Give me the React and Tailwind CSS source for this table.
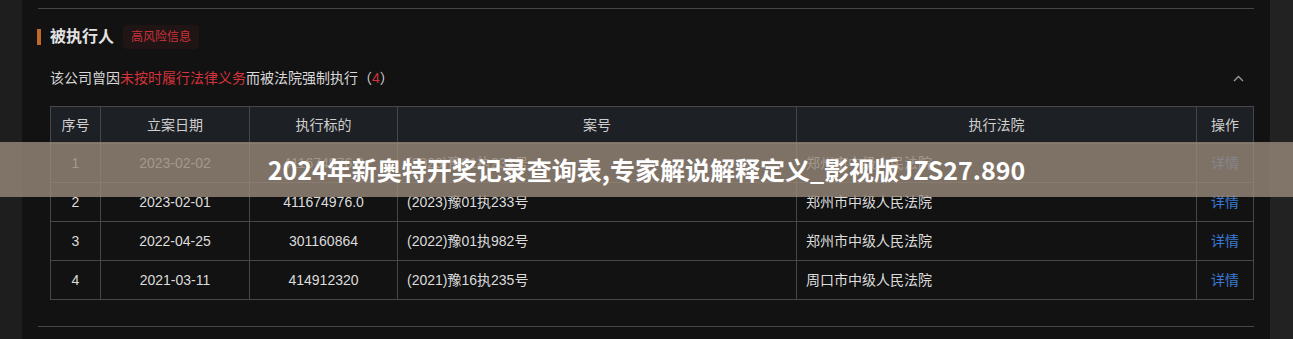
import React from 'react'

const rows = [
  { no: 1, date: '2023-02-02', amount: '411674976.0', caseNo: '(2023)豫01执233号', court: '郑州市中级人民法院' },
  { no: 2, date: '2023-02-01', amount: '411674976.0', caseNo: '(2023)豫01执233号', court: '郑州市中级人民法院' },
  { no: 3, date: '2022-04-25', amount: '301160864', caseNo: '(2022)豫01执982号', court: '郑州市中级人民法院' },
  { no: 4, date: '2021-03-11', amount: '414912320', caseNo: '(2021)豫16执235号', court: '周口市中级人民法院' },
]

const ChevronUp = () => (
  <svg width="11" height="7" viewBox="0 0 11 7" fill="none">
    <path d="M1 6 L5.5 1.5 L10 6" stroke="#9a9a9a" strokeWidth="1.4" />
  </svg>
)

const App = () => {
  return (
    <div
      className="relative flex w-[1293px] h-[339px] overflow-hidden bg-[#1f1f1f]"
      style={{ fontFamily: '"Liberation Sans", "Noto Sans CJK SC", sans-serif' }}
    >
      <div className="w-[22px] shrink-0 bg-[#1e1e1e]" />

      <div className="flex-1 bg-[#121212] px-4 pt-2">
        <div className="border-t border-[#464646]" />

        <div className="flex items-center mt-[16px] h-[24px]">
          <div className="w-[4px] h-[16px] bg-[#c06a2a] -ml-px" />
          <span className="ml-[9px] text-[16px] font-bold text-[#e2e2e2] leading-none">被执行人</span>
          <span className="ml-[9px] h-[24px] px-[8px] flex items-center bg-[#1f1515] text-[12px] text-[#cc3139] rounded-sm">
            高风险信息
          </span>
        </div>

        <div className="flex items-center justify-between mt-[19px] pl-3 pr-[10px] h-[20px]">
          <p className="text-[14px] text-[#d8d8d8]">
            该公司曾因<span className="text-[#d4333b]">未按时履行法律义务</span>而被法院强制执行（<span className="text-[#d4333b]">4</span>）
          </p>
          <ChevronUp />
        </div>

        <table className="ml-3 mt-[18px] w-[1203px] border-collapse text-[14px] text-[#dcdcdc] table-fixed">
          <colgroup>
            <col className="w-[50px]" />
            <col className="w-[149px]" />
            <col className="w-[148px]" />
            <col className="w-[399px]" />
            <col className="w-[400px]" />
            <col className="w-[57px]" />
          </colgroup>
          <thead>
            <tr className="bg-[#1d2024] h-[37px] text-[#cfcfcf]">
              <th className="border border-[#474747] font-normal">序号</th>
              <th className="border border-[#474747] font-normal">立案日期</th>
              <th className="border border-[#474747] font-normal">执行标的</th>
              <th className="border border-[#474747] font-normal">案号</th>
              <th className="border border-[#474747] font-normal">执行法院</th>
              <th className="border border-[#474747] font-normal">操作</th>
            </tr>
          </thead>
          <tbody>
            {rows.map((r) => (
              <tr key={r.no} className="h-[39px]">
                <td className="border border-[#474747] text-center">{r.no}</td>
                <td className="border border-[#474747] text-center">{r.date}</td>
                <td className="border border-[#474747] text-center">{r.amount}</td>
                <td className="border border-[#474747] pl-[9px]">{r.caseNo}</td>
                <td className="border border-[#474747] pl-[9px]">{r.court}</td>
                <td className="border border-[#474747] text-center text-[#3a7ad6]">详情</td>
              </tr>
            ))}
          </tbody>
        </table>

        <div className="mt-[26px] border-t border-[#464646]" />
      </div>

      <div className="w-[23px] shrink-0 bg-[#222222]" />

      <div className="absolute left-0 right-0 top-[142px] h-[55px] bg-[rgba(150,135,122,0.82)] flex items-center justify-center">
        <span
          className="text-[25px] font-bold text-white"
          style={{ fontFamily: '"Noto Sans CJK SC", "Noto Sans", sans-serif' }}
        >
          2024年新奥特开奖记录查询表,专家解说解释定义_影视版JZS27.890
        </span>
      </div>
    </div>
  )
}

export default App
